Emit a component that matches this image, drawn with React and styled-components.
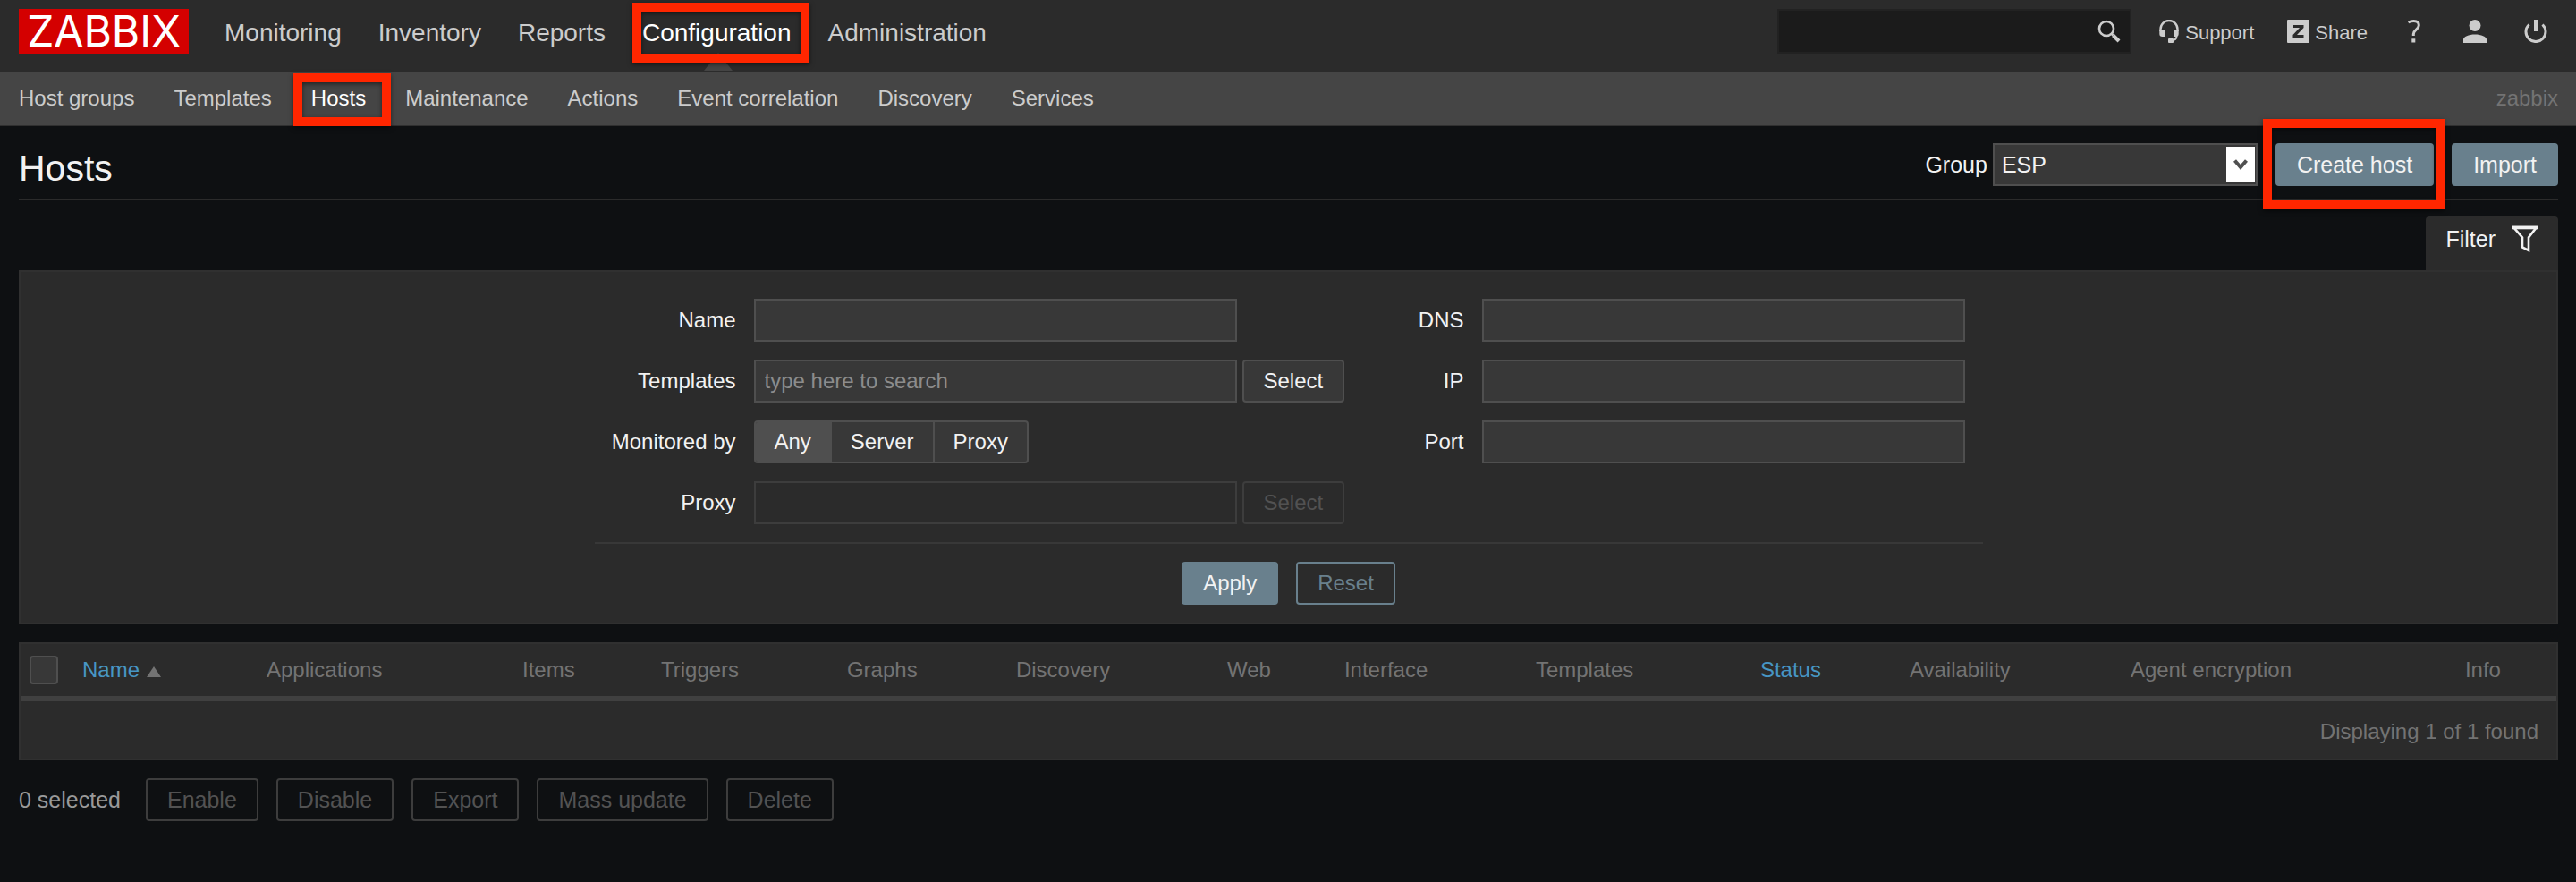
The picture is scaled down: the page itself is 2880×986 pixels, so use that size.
import React from "react";
import styled, { createGlobalStyle, css } from "styled-components";

const GlobalStyle = createGlobalStyle`
  *, *::before, *::after { box-sizing: border-box; }
  body {
    margin: 0;
    background: #0e1012;
    color: #f2f2f2;
    font-family: "Liberation Sans", Arial, sans-serif;
    font-size: 25px;
    line-height: 28px;
  }
  button, input, select { font: inherit; margin: 0; }
`;

const marked = css`
  position: relative;
  &::after {
    content: "";
    position: absolute;
    border: 10px solid #ff2600;
    box-shadow: 0 2px 5px rgba(0, 0, 0, 0.5), inset 0 2px 5px rgba(0, 0, 0, 0.5);
    pointer-events: none;
    z-index: 2;
  }
`;

const TopBar = styled.header`
  display: flex;
  align-items: center;
  justify-content: space-between;
  height: 80px;
  padding: 0 21px 10px;
  background: #2b2b2b;
`;

const TopGroup = styled.div`
  display: flex;
  align-items: center;
  gap: 40px;
`;

const Logo = styled.a`
  display: flex;
  align-items: center;
  justify-content: center;
  width: 190px;
  height: 50px;
  background: #d40000;
  color: #fff;
  font-family: Inter, "Liberation Sans", sans-serif;
  font-size: 48px;
  font-weight: 400;
  line-height: 50px;
  text-decoration: none;
`;

const MainNav = styled.nav`
  display: flex;
  gap: 41px;
  font-size: 28px;
  line-height: 50px;
  padding-top: 4px;
`;

const MainLink = styled.a`
  position: relative;
  color: ${(p) => (p.$active ? "#fff" : "#ccc")};
  text-decoration: none;
  ${(p) =>
    p.$active &&
    css`
      ${marked}
      &::before {
        content: "";
        position: absolute;
        bottom: -17px;
        left: 50%;
        margin-left: -14px;
        border: 16px solid transparent;
        border-top-width: 0;
        border-bottom: 20px solid #454545;
      }
      &::after { inset: -9px -20px -8px -11px; }
    `}
`;

const SearchBox = styled.form`
  display: flex;
  width: 396px;
  height: 50px;
  background: #1b1b1b;
  border: 2px solid #222;
  margin-right: -10px;
`;

const SearchInput = styled.input`
  flex: 1;
  min-width: 0;
  padding: 0 10px;
  border: 0;
  outline: 0;
  background: transparent;
  color: #f2f2f2;
`;

const IconButton = styled.button`
  display: flex;
  align-items: center;
  justify-content: center;
  padding: 0 10px;
  border: 0;
  background: transparent;
  color: #ccc;
`;

const Tools = styled.nav`
  display: flex;
  align-items: center;
  gap: 37px;
  padding-right: 11px;
`;

const ToolLink = styled.a`
  display: flex;
  align-items: center;
  justify-content: center;
  gap: 6px;
  min-width: 26px;
  padding-top: 3px;
  color: #ccc;
  font-size: 22px;
  text-decoration: none;
  svg { display: block; margin-bottom: 4px; }
`;

const IconTools = styled.div`
  display: flex;
  gap: 42px;
  padding-left: 2px;
`;

const SubBar = styled.nav`
  display: flex;
  align-items: center;
  gap: 44px;
  height: 61px;
  padding: 0 20px 1px 21px;
  background: #454545;
  border-bottom: 1px solid #303030;
  font-size: 24px;
`;

const SubLink = styled.a`
  color: ${(p) => (p.$active ? "#fff" : "#ccc")};
  text-decoration: none;
  ${(p) =>
    p.$active &&
    css`
      ${marked}
      &::after { inset: -14px -28px -17px -20px; }
    `}
`;

const ServerName = styled.span`
  margin-left: auto;
  color: #737373;
`;

const Page = styled.main`
  padding: 0 20px 68px 21px;
`;

const TitleRow = styled.div`
  display: flex;
  align-items: center;
  justify-content: space-between;
  height: 83px;
  padding-top: 5px;
  border-bottom: 2px solid #2b2b2b;
`;

const Title = styled.h1`
  margin: 0;
  padding-top: 8px;
  font-size: 41px;
  font-weight: 400;
  line-height: 44px;
`;

const TitleActions = styled.div`
  display: flex;
  align-items: center;
  gap: 20px;
`;

const GroupField = styled.label`
  display: flex;
  align-items: center;
  gap: 6px;
`;

const SelectWrap = styled.span`
  position: relative;
  display: block;
`;

const GroupSelect = styled.select`
  display: block;
  appearance: none;
  width: 296px;
  height: 48px;
  padding: 0 8px;
  border: 2px solid #4f4f4f;
  border-radius: 0;
  background: #383838;
  color: #f2f2f2;
`;

const SelectArrow = styled.span`
  position: absolute;
  top: 4px;
  right: 3px;
  display: flex;
  align-items: center;
  justify-content: center;
  width: 32px;
  height: 40px;
  background: #fff;
  pointer-events: none;
`;

const tones = {
  primary: css`background: #69808d; border-color: #69808d; color: #f2f2f2;`,
  outline: css`background: transparent; border-color: #69808d; color: #69808d;`,
  grey: css`background: #383838; border-color: #4f4f4f; color: #f2f2f2;`,
  disabled: css`background: transparent; border-color: #3d3d3d; color: #525252;`,
};

const Button = styled.button`
  height: 48px;
  padding: 0 22px;
  border: 2px solid;
  border-radius: 4px;
  line-height: 28px;
  white-space: nowrap;
  ${(p) => tones[p.$tone]}
  ${(p) =>
    p.$marked &&
    css`
      ${marked}
      &::after { inset: -29px -14px -28px -16px; }
    `}
`;

const TabRow = styled.div`
  display: flex;
  justify-content: flex-end;
  padding-top: 18px;
`;

const FilterTab = styled.button`
  display: flex;
  align-items: center;
  gap: 18px;
  height: 60px;
  padding: 0 22px 10px;
  border: 0;
  border-radius: 4px 4px 0 0;
  background: #2b2b2b;
  color: #f2f2f2;
`;

const FilterPanel = styled.section`
  display: flex;
  justify-content: center;
  padding: 30px 20px 20px;
  border: 2px solid #303030;
  background: #2b2b2b;
`;

const FilterForm = styled.form`
  width: 1552px;
  font-size: 24px;
`;

const FilterColumns = styled.div`
  display: flex;
  justify-content: space-between;
  align-items: flex-start;
  padding: 0 20px 20px 0;
  border-bottom: 2px solid #383838;
`;

const FieldGrid = styled.div`
  display: grid;
  grid-template-columns: ${(p) => (p.$wide ? "158px auto" : "auto auto")};
  gap: 20px;
  align-items: center;
`;

const FieldLabel = styled.label`
  text-align: right;
`;

const FieldRow = styled.div`
  display: flex;
  gap: 6px;
`;

const TextInput = styled.input`
  width: 540px;
  height: 48px;
  padding: 0 10px;
  border: 2px solid #4f4f4f;
  border-radius: 0;
  outline: 0;
  background: #383838;
  color: #f2f2f2;
  &::placeholder { color: #8c8c8c; opacity: 1; }
  &:disabled { background: #2b2b2b; border-color: #3d3d3d; }
`;

const Segments = styled.div`
  display: flex;
  height: 48px;
  border: 2px solid #4f4f4f;
  border-radius: 4px;
  background: #383838;
  overflow: hidden;
`;

const Segment = styled.label`
  position: relative;
  display: flex;
  align-items: center;
  padding: 0 21px;
  & + & { border-left: 2px solid #4f4f4f; }
  &:has(input:checked) { background: #4f4f4f; }
  input {
    position: absolute;
    inset: 0;
    appearance: none;
  }
`;

const FormActions = styled.div`
  display: flex;
  justify-content: center;
  gap: 20px;
  padding-top: 20px;
`;

const HostTable = styled.table`
  width: 100%;
  margin-top: 20px;
  border: 2px solid #303030;
  border-spacing: 0;
  table-layout: fixed;
  background: #2b2b2b;
  color: #737373;
  font-size: 24px;
`;

const Th = styled.th`
  height: 64px;
  padding: 0 10px;
  border-bottom: 6px solid #404040;
  font-weight: 400;
  text-align: left;
  white-space: nowrap;
`;

const SortLink = styled.a`
  display: inline-flex;
  align-items: center;
  gap: 8px;
  color: #4796c4;
  text-decoration: none;
`;

const SortArrow = styled.span`
  margin-top: 4px;
  border: 8px solid transparent;
  border-top-width: 0;
  border-bottom: 12px solid #737373;
`;

const CheckBox = styled.input`
  display: block;
  appearance: none;
  width: 32px;
  height: 32px;
  margin: 0;
  border: 2px solid #4f4f4f;
  border-radius: 4px;
  background: #383838;
`;

const SummaryCell = styled.td`
  height: 64px;
  padding: 4px 20px 0;
  text-align: right;
`;

const BulkBar = styled.div`
  display: flex;
  align-items: center;
  gap: 20px;
  padding-top: 20px;
`;

const Selected = styled.span`
  padding-right: 8px;
  color: #999;
`;

const SearchIcon = () => (
  <svg width="26" height="26" viewBox="0 0 26 26" fill="none" stroke="currentColor">
    <circle cx="10" cy="10" r="8" strokeWidth="2.600" />
    <path d="M15.500 15.500l2 2" strokeWidth="2.600" />
    <path d="M17.500 17.500l6.500 6.500" strokeWidth="4" />
  </svg>
);

const HeadsetIcon = () => (
  <svg width="24" height="26" viewBox="0 0 24 26" fill="none" stroke="currentColor">
    <path d="M2.500 13V10.500a9.500 9.500 0 0 1 19 0V13" strokeWidth="2.400" />
    <path d="M1.300 11H7v8H4.500a3.200 3.200 0 0 1-3.200-3.200zM22.700 11H17v8h2.500a3.200 3.200 0 0 0 3.200-3.200z" fill="currentColor" stroke="none" />
    <path d="M20.500 18c0 3.500-2 5.200-6 5.200" strokeWidth="2" />
    <rect x="11" y="21" width="6" height="5" rx="1" fill="currentColor" stroke="none" />
  </svg>
);

const ShareIcon = () => (
  <svg width="25" height="26" viewBox="0 0 25 26">
    <rect width="25" height="26" rx="1" fill="currentColor" />
    <path d="M7 6h11.500v3L11 17h7.500v3H6.500v-3L14 9H7z" fill="#2b2b2b" />
  </svg>
);

const HelpIcon = () => (
  <svg width="26" height="26" viewBox="0 0 26 26" fill="none" stroke="currentColor" strokeWidth="3">
    <path d="M6.500 3C9 1.700 10.500 1.500 12.500 1.500c3.800 0 5.800 1.900 5.800 4.700 0 4.800-6 5-6 9.800v2" />
    <path d="M12.300 21.300V25.500" strokeWidth="4" />
  </svg>
);

const UserIcon = () => (
  <svg width="26" height="26" viewBox="0 0 26 26" fill="currentColor">
    <circle cx="13" cy="6.500" r="6.500" />
    <path d="M0 26v-4c0-3 6-5.500 13-5.500S26 19 26 22v4z" />
  </svg>
);

const PowerIcon = () => (
  <svg width="26" height="26" viewBox="0 0 26 26" fill="none" stroke="currentColor">
    <path d="M5.500 5.500A11 11 0 1 0 20.500 5.500" strokeWidth="3" />
    <path d="M13 0v13" strokeWidth="4" />
  </svg>
);

const FunnelIcon = () => (
  <svg width="30" height="30" viewBox="0 0 30 30" fill="none" stroke="currentColor" strokeWidth="2.600">
    <path d="M2 2h26L19 13.500V28l-7-3.500v-11z" />
    <path d="M1 2.500h28" strokeWidth="3.600" />
  </svg>
);

const mainItems = ["Monitoring", "Inventory", "Reports", "Configuration", "Administration"];
const subItems = [
  "Host groups", "Templates", "Hosts", "Maintenance", "Actions",
  "Event correlation", "Discovery", "Services",
];
const columns = [
  ["Name", 206], ["Applications", 286], ["Items", 155], ["Triggers", 208],
  ["Graphs", 189], ["Discovery", 236], ["Web", 131], ["Interface", 214],
  ["Templates", 251], ["Status", 167], ["Availability", 247],
  ["Agent encryption", 374], ["Info", 112],
];
const tableUnits = 2835;
const bulkActions = ["Enable", "Disable", "Export", "Mass update", "Delete"];

const Col = styled.col`
  width: ${(p) => (p.$units / tableUnits) * 100}%;
`;

function ColumnTitle({ name }) {
  if (name === "Name") return <SortLink href="#name">Name<SortArrow /></SortLink>;
  if (name === "Status") return <SortLink href="#status">Status</SortLink>;
  return name;
}

export default function App() {
  return (
    <>
      <GlobalStyle />
      <TopBar>
        <TopGroup>
          <Logo href="#home">ZABBIX</Logo>
          <MainNav>
            {mainItems.map((item) => (
              <MainLink key={item} href="#main" $active={item === "Configuration"}>{item}</MainLink>
            ))}
          </MainNav>
        </TopGroup>
        <TopGroup>
          <SearchBox>
            <SearchInput type="text" aria-label="Search" />
            <IconButton type="button" aria-label="Search"><SearchIcon /></IconButton>
          </SearchBox>
          <Tools>
            <ToolLink href="#support"><HeadsetIcon />Support</ToolLink>
            <ToolLink href="#share"><ShareIcon />Share</ToolLink>
            <IconTools>
              <ToolLink href="#help" aria-label="Help"><HelpIcon /></ToolLink>
              <ToolLink href="#profile" aria-label="Profile"><UserIcon /></ToolLink>
              <ToolLink href="#logout" aria-label="Sign out"><PowerIcon /></ToolLink>
            </IconTools>
          </Tools>
        </TopGroup>
      </TopBar>
      <SubBar>
        {subItems.map((item) => (
          <SubLink key={item} href="#sub" $active={item === "Hosts"}>{item}</SubLink>
        ))}
        <ServerName>zabbix</ServerName>
      </SubBar>
      <Page>
        <TitleRow>
          <Title>Hosts</Title>
          <TitleActions>
            <GroupField>
              Group
              <SelectWrap>
                <GroupSelect defaultValue="ESP"><option>ESP</option></GroupSelect>
                <SelectArrow>
                  <svg width="16" height="14" viewBox="0 0 16 14" fill="none" stroke="#505050" strokeWidth="4">
                    <path d="M1.500 2.500L8 10l6.500-7.500" />
                  </svg>
                </SelectArrow>
              </SelectWrap>
            </GroupField>
            <Button $tone="primary" $marked>Create host</Button>
            <Button $tone="primary">Import</Button>
          </TitleActions>
        </TitleRow>
        <TabRow>
          <FilterTab>Filter<FunnelIcon /></FilterTab>
        </TabRow>
        <FilterPanel>
          <FilterForm>
            <FilterColumns>
              <FieldGrid $wide>
                <FieldLabel htmlFor="f-name">Name</FieldLabel>
                <FieldRow><TextInput id="f-name" type="text" /></FieldRow>
                <FieldLabel htmlFor="f-templates">Templates</FieldLabel>
                <FieldRow>
                  <TextInput id="f-templates" type="text" placeholder="type here to search" />
                  <Button type="button" $tone="grey">Select</Button>
                </FieldRow>
                <FieldLabel as="span" id="f-monitored">Monitored by</FieldLabel>
                <FieldRow role="radiogroup" aria-labelledby="f-monitored">
                  <Segments>
                    {["Any", "Server", "Proxy"].map((item) => (
                      <Segment key={item}>
                        <input type="radio" name="monitored" defaultChecked={item === "Any"} />
                        {item}
                      </Segment>
                    ))}
                  </Segments>
                </FieldRow>
                <FieldLabel htmlFor="f-proxy">Proxy</FieldLabel>
                <FieldRow>
                  <TextInput id="f-proxy" type="text" disabled />
                  <Button type="button" $tone="disabled" disabled>Select</Button>
                </FieldRow>
              </FieldGrid>
              <FieldGrid>
                <FieldLabel htmlFor="f-dns">DNS</FieldLabel>
                <TextInput id="f-dns" type="text" />
                <FieldLabel htmlFor="f-ip">IP</FieldLabel>
                <TextInput id="f-ip" type="text" />
                <FieldLabel htmlFor="f-port">Port</FieldLabel>
                <TextInput id="f-port" type="text" />
              </FieldGrid>
            </FilterColumns>
            <FormActions>
              <Button type="button" $tone="primary">Apply</Button>
              <Button type="button" $tone="outline">Reset</Button>
            </FormActions>
          </FilterForm>
        </FilterPanel>
        <HostTable>
          <colgroup>
            <Col $units={59} />
            {columns.map(([name, units]) => <Col key={name} $units={units} />)}
          </colgroup>
          <thead>
            <tr>
              <Th><CheckBox type="checkbox" aria-label="Select all hosts" /></Th>
              {columns.map(([name]) => <Th key={name} scope="col"><ColumnTitle name={name} /></Th>)}
            </tr>
          </thead>
          <tbody>
            <tr><SummaryCell colSpan={14}>Displaying 1 of 1 found</SummaryCell></tr>
          </tbody>
        </HostTable>
        <BulkBar>
          <Selected>0 selected</Selected>
          {bulkActions.map((item) => (
            <Button key={item} type="button" $tone="disabled" disabled>{item}</Button>
          ))}
        </BulkBar>
      </Page>
    </>
  );
}
